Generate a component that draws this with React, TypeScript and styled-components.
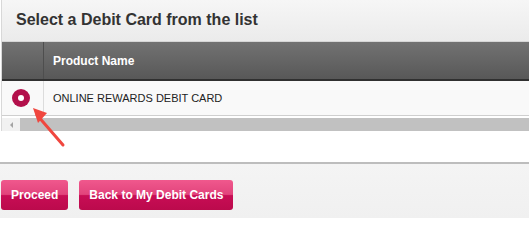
import * as React from "react";
import styled, { createGlobalStyle } from "styled-components";

const GlobalStyle = createGlobalStyle`
    html, body {
        margin: 0;
        padding: 0;
        background: #ffffff;
        font-family: "Liberation Sans", Arial, sans-serif;
    }
`;

const Page = styled.div`
    width: 529px;
    height: 218px;
    position: relative;
    overflow: hidden;
    display: flex;
    flex-direction: column;
`;

const Panel = styled.div`
    margin-left: 1px;
    border-left: 1px solid #d8d8d8;
    display: flex;
    flex-direction: column;
`;

const TitleBar = styled.div`
    height: 42px;
    box-sizing: border-box;
    border-bottom: 1px solid #d6d6d6;
    background: linear-gradient(#f6f6f6, #ebebeb);
    display: flex;
    align-items: center;
    padding-left: 14px;
`;

const Title = styled.h2`
    margin: 0 0 1px;
    font-size: 16px;
    font-weight: bold;
    color: #333333;
`;

const Row = styled.div<{ $header?: boolean }>`
    display: flex;
    height: ${p => (p.$header ? 39 : 35)}px;
    box-sizing: border-box;
    background: ${p =>
        p.$header ? "linear-gradient(#727272, #585858)" : "#f9f9f9"};
    border-bottom: ${p => (p.$header ? "2px solid #303030" : "1px solid #cfcfcf")};
`;

const Cell = styled.div<{ $header?: boolean; $narrow?: boolean }>`
    display: flex;
    align-items: center;
    box-sizing: border-box;
    ${p => (p.$narrow ? "width: 42px; justify-content: center;" : "flex: 1; padding-left: 9px;")}
    ${p => p.$narrow && `border-right: 1px solid ${p.$header ? "#4e4e4e" : "#dcdcdc"};`}
    color: ${p => (p.$header ? "#ffffff" : "#222222")};
    font-size: ${p => (p.$header ? 12 : 11)}px;
    font-weight: ${p => (p.$header ? "bold" : "normal")};
`;

const Radio = styled.span`
    width: 18px;
    height: 18px;
    border-radius: 50%;
    background: #b3104b;
    display: flex;
    align-items: center;
    justify-content: center;
    margin: 0 4px 1px 0;
    &::after {
        content: "";
        width: 6px;
        height: 6px;
        border-radius: 50%;
        background: #ffffff;
    }
`;

const ScrollBar = styled.div`
    display: flex;
    height: 13px;
    margin-top: 2px;
    background: #f1f1f1;
`;

const ScrollButton = styled.div`
    width: 18px;
    display: flex;
    align-items: center;
    justify-content: center;
    &::before {
        content: "";
        border-top: 3px solid transparent;
        border-bottom: 3px solid transparent;
        border-right: 3px solid #a3a3a3;
    }
`;

const ScrollThumb = styled.div`
    flex: 1;
    background: #c1c1c1;
`;

const Spacer = styled.div`
    height: 31px;
`;

const Footer = styled.div`
    flex: 1;
    border-top: 2px solid #bdbdbd;
    background: linear-gradient(#f4f4f4, #f0f0f0);
    display: flex;
    align-items: flex-start;
    gap: 11px;
    padding: 16px 0 0 1px;
`;

const Button = styled.button`
    height: 30px;
    padding: 0 10px;
    border: none;
    border-radius: 3px;
    background: linear-gradient(#f0588d 0%, #e2447c 48%, #c80d55 52%, #bb0a4c 100%);
    color: #ffffff;
    font-family: "Liberation Sans", Arial, sans-serif;
    font-size: 12px;
    font-weight: bold;
    cursor: pointer;
`;

const Pointer = styled.svg`
    position: absolute;
    left: 28px;
    top: 105px;
`;

export default function App() {
    return (
        <>
            <GlobalStyle />
            <Page>
                <Panel>
                    <TitleBar>
                        <Title>Select a Debit Card from the list</Title>
                    </TitleBar>
                    <Row $header>
                        <Cell $header $narrow />
                        <Cell $header>Product Name</Cell>
                    </Row>
                    <Row>
                        <Cell $narrow>
                            <Radio />
                        </Cell>
                        <Cell>ONLINE REWARDS DEBIT CARD</Cell>
                    </Row>
                    <ScrollBar>
                        <ScrollButton />
                        <ScrollThumb />
                    </ScrollBar>
                </Panel>
                <Spacer />
                <Footer>
                    <Button>Proceed</Button>
                    <Button>Back to My Debit Cards</Button>
                </Footer>
                <Pointer width="42" height="46" viewBox="0 0 42 46">
                    <line
                        x1="35"
                        y1="40"
                        x2="9"
                        y2="10"
                        stroke="#f0473f"
                        strokeWidth="3"
                        strokeLinecap="round"
                    />
                    <polygon points="5,3 19,8 10,18" fill="#f0473f" />
                </Pointer>
            </Page>
        </>
    );
}
